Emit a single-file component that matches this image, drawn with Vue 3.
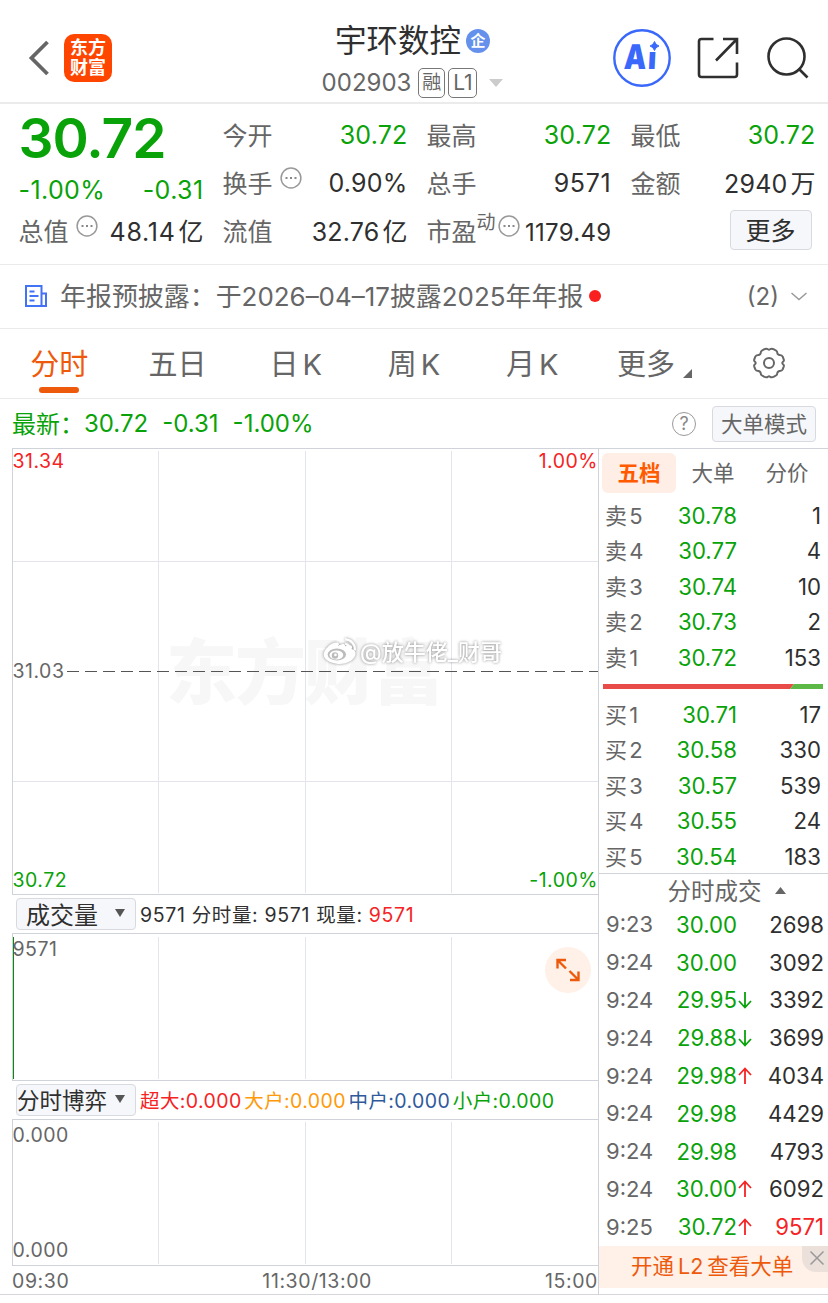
<script setup>
import { ref } from 'vue';

const tabs = ['分时', '五日', '日 K', '周 K', '月 K', '更多'];
const activeTab = ref('分时');

const sideTabs = ['五档', '大单', '分价'];
const activeSide = ref('五档');

const sells = [
  { label: '卖 5', price: '30.78', volume: 1 },
  { label: '卖 4', price: '30.77', volume: 4 },
  { label: '卖 3', price: '30.74', volume: 10 },
  { label: '卖 2', price: '30.73', volume: 2 },
  { label: '卖 1', price: '30.72', volume: 153 },
];

const buys = [
  { label: '买 1', price: '30.71', volume: 17 },
  { label: '买 2', price: '30.58', volume: 330 },
  { label: '买 3', price: '30.57', volume: 539 },
  { label: '买 4', price: '30.55', volume: 24 },
  { label: '买 5', price: '30.54', volume: 183 },
];

const trades = [
  { time: '9:23', price: '30.00', volume: 2698 },
  { time: '9:24', price: '30.00', volume: 3092 },
  { time: '9:24', price: '29.95', dir: 'down', volume: 3392 },
  { time: '9:24', price: '29.88', dir: 'down', volume: 3699 },
  { time: '9:24', price: '29.98', dir: 'up', volume: 4034 },
  { time: '9:24', price: '29.98', volume: 4429 },
  { time: '9:24', price: '29.98', volume: 4793 },
  { time: '9:24', price: '30.00', dir: 'up', volume: 6092 },
  { time: '9:25', price: '30.72', dir: 'up', volume: 9571, hot: true },
];
</script>

<template>
  <div class="page">
    <header class="header">
      <div class="header-left">
        <svg class="back" width="22" height="36" viewBox="0 0 22 36">
          <path d="M19.500 2 3.500 18l16 16" fill="none" stroke="#666" stroke-width="3.800" />
        </svg>
        <div class="logo"><span>东方</span><span>财富</span></div>
      </div>
      <div class="header-title">
        <div class="name">
          <span>宇环数控</span>
          <span class="company">企</span>
        </div>
        <div class="code">
          <span class="code-num">002903</span>
          <span class="tag">融</span>
          <span class="tag tag-l1">L1</span>
          <svg width="14" height="8" viewBox="0 0 14 8"><path d="M0 0h14L7 8z" fill="#ccc" /></svg>
        </div>
      </div>
      <div class="header-right">
        <svg width="58" height="58" viewBox="0 0 58 58">
          <text class="ai-text" transform="translate(10.5 40) skewX(-3) scale(.83 1)">A<tspan dx="2">i</tspan></text>
          <path d="M34.500 10h13v13h-13z" fill="#fff" />
          <path d="M41.500 12.500q1 3.500 4.500 4.500-3.500 1-4.500 4.500-1-3.500-4.500-4.500 3.500-1 4.500-4.500z" fill="#3a68fb" stroke="#3a68fb" />
          <circle cx="29" cy="29" r="27.700" fill="none" stroke="#3a68fb" stroke-width="2.400" />
        </svg>
        <svg class="share" width="42" height="42" viewBox="0 0 42 42">
          <path d="M16.500 2H4.500A2.500 2.500 0 0 0 2 4.500v33A2.500 2.500 0 0 0 4.500 40h33a2.500 2.500 0 0 0 2.500-2.500V25.500M26 2h14v15M39.500 2.500l-20.500 21" fill="none" stroke="#2f2f2f" stroke-width="2.600" />
        </svg>
        <svg width="44" height="44" viewBox="0 0 44 44">
          <circle cx="20.500" cy="20.500" r="18" fill="none" stroke="#2f2f2f" stroke-width="2.600" />
          <path d="M32.500 32.500l9 9" stroke="#2f2f2f" stroke-width="2.600" />
        </svg>
      </div>
    </header>

    <section class="quote">
      <div class="quote-col first">
        <div class="price">30.72</div>
        <div class="cell change"><span>-1.00%</span><span>-0.31</span></div>
        <div class="cell total">
          <label>总值
            <svg class="dots" width="22" height="22" viewBox="0 0 22 22">
              <circle cx="11" cy="11" r="9.900" fill="none" stroke="#999" stroke-width="1.500" />
              <path d="M5.500 11h2M10 11h2M14.500 11h2" stroke="#888" stroke-width="2" />
            </svg>
          </label>
          <b class="wide">48.14<i>亿</i></b>
        </div>
      </div>
      <div class="quote-col">
        <div class="cell"><label>今开</label><b class="green">30.72</b></div>
        <div class="cell">
          <label>换手
            <svg class="dots" width="22" height="22" viewBox="0 0 22 22">
              <circle cx="11" cy="11" r="9.900" fill="none" stroke="#999" stroke-width="1.500" />
              <path d="M5.500 11h2M10 11h2M14.500 11h2" stroke="#888" stroke-width="2" />
            </svg>
          </label>
          <b>0.90%</b>
        </div>
        <div class="cell"><label>流值</label><b>32.76<i>亿</i></b></div>
      </div>
      <div class="quote-col">
        <div class="cell"><label>最高</label><b class="green">30.72</b></div>
        <div class="cell"><label>总手</label><b class="wide">9571</b></div>
        <div class="cell pe">
          <label>市盈<sup>动</sup>
            <svg class="dots" width="22" height="22" viewBox="0 0 22 22">
              <circle cx="11" cy="11" r="9.900" fill="none" stroke="#999" stroke-width="1.500" />
              <path d="M5.500 11h2M10 11h2M14.500 11h2" stroke="#888" stroke-width="2" />
            </svg>
          </label>
          <b>1179.49</b>
        </div>
      </div>
      <div class="quote-col">
        <div class="cell"><label>最低</label><b class="green">30.72</b></div>
        <div class="cell"><label>金额</label><b>2940<i>万</i></b></div>
        <div class="cell more-cell"><button class="more">更多</button></div>
      </div>
    </section>

    <section class="notice">
      <svg width="22" height="22" viewBox="0 0 22 22">
        <path d="M1 1h15.500v20H1zM16.500 8.500H21V21h-4.500M4.500 6.500h5M4.500 11h9M4.500 15.500h5" fill="none" stroke="#4272f5" stroke-width="2" />
      </svg>
      <span class="notice-text">年报预披露：于2026–04–17披露2025年年报</span>
      <span class="dot"></span>
      <span class="count">(2)</span>
      <svg width="16" height="9" viewBox="0 0 16 9"><path d="M.5 1 8 7.500 15.500 1" fill="none" stroke="#999" stroke-width="1.500" /></svg>
    </section>

    <nav class="tabs">
      <div v-for="tab in tabs" :key="tab" class="tab" :class="{ active: tab === activeTab, 'tab-more': tab === '更多' }" @click="activeTab = tab">
        <span>{{ tab }}</span>
        <svg v-if="tab === '更多'" class="corner" width="9" height="9" viewBox="0 0 9 9"><path d="M9 0v9H0z" fill="#666" /></svg>
      </div>
      <div class="tab">
        <svg class="gear" width="34" height="32" viewBox="0 0 34 32">
          <path d="M12 2.300Q14.500 1 16 2.300q1 .8 2 0Q19.500 1 22 2.300l2.300 1.400q.9.700 1 2.100.2 1.900 2.500 2.200 2.200.2 2.900 1.700l1.100 3q.4 1.200-.8 2.100-1.400 1.200 0 2.400 1.200.9.800 2.100l-1.100 3q-.7 1.500-2.900 1.700-2.300.3-2.500 2.200-.1 1.400-1 2.100L22 29.700q-2.500 1.300-4 0-1-.8-2 0-1.500 1.300-4 0l-2.300-1.400q-.9-.7-1-2.100-.2-1.900-2.500-2.200-2.200-.2-2.900-1.700l-1.100-3q-.4-1.200.8-2.100 1.400-1.200 0-2.400-1.200-.9-.8-2.100l1.100-3Q4 8.200 6.200 8q2.300-.3 2.500-2.200.1-1.400 1-2.100z" fill="none" stroke="#666" stroke-width="2" />
          <circle cx="17" cy="16" r="5" fill="none" stroke="#666" stroke-width="2" />
        </svg>
      </div>
    </nav>

    <section class="latest">
      <span class="l-name">最新：</span><span class="l-price">30.72</span><span class="l-diff">-0.31</span><span>-1.00%</span>
      <span class="help">?</span>
      <button class="mode">大单模式</button>
    </section>

    <main class="main">
      <div class="charts">
        <div class="panel price-panel">
          <svg class="grid" width="585" height="445" viewBox="0 0 585 445">
            <text class="wm" x="153" y="249" textLength="278">东方财富</text>
            <path d="M145.500 2v442M292.500 2v442M438.500 2v442M0 112.500h585M0 332.500h585" stroke="#e3e4ec" />
            <path d="M0 222.500h585" stroke="#555" stroke-dasharray="12 6" />
            <g class="weibo" fill="#fff">
              <g transform="translate(23 16) scale(.92)">
                <path d="M328 197c3-2 8-4 8 0 5-2 9-1 7 3 4 1 5 4 4 7-3 7-12 10-20 9-9-1-16-6-14-12 2-5 8-11 13-11 4 0 4 2 2 4z" />
                <ellipse cx="327" cy="206" rx="10" ry="6.500" fill="#bbb" />
                <ellipse cx="326.500" cy="206.500" rx="7.500" ry="5" />
                <circle cx="325" cy="207" r="3.500" fill="#bbb" />
                <circle cx="325.500" cy="206.500" r="1.500" />
                <path d="M336 189.500a10.500 10.500 0 0 1 10.500 12M336 194.500a6 6 0 0 1 5 5" fill="none" stroke="#fff" stroke-width="2.500" />
              </g>
              <text x="347" y="211" textLength="142" lengthAdjust="spacingAndGlyphs">@放牛佬_财哥</text>
            </g>
          </svg>
          <div class="labels"><span class="red">31.34</span><span class="red">1.00%</span></div>
          <div class="labels"><span class="mid">31.03</span></div>
          <div class="labels"><span class="green">30.72</span><span class="green">-1.00%</span></div>
        </div>

        <div class="bar">
          <button class="select">成交量<svg width="10" height="8" viewBox="0 0 10 8"><path d="M0 0h10L5 8z" fill="#555" /></svg></button>
          <span class="vol">9571 分时量: 9571 现量: <em class="red">9571</em></span>
        </div>

        <div class="panel sub-panel vol-panel">
          <svg class="grid" width="585" height="146" viewBox="0 0 585 146">
            <path d="M145.500 3v142M292.500 3v142M438.500 3v142" stroke="#e3e4ec" />
            <path d="M.5 3v142" stroke="#0a8a0a" />
          </svg>
          <div class="labels"><span>9571</span></div>
          <div class="expand">
            <svg width="24" height="24" viewBox="0 0 24 24">
              <path d="M1.500 10.500V2H10M2 2.500l8 8M22.500 13.500v8.500H14M22 21.500l-8.500-8.500" fill="none" stroke="#ee5a0c" stroke-width="2.400" />
            </svg>
          </div>
        </div>

        <div class="bar game">
          <button class="select">分时博弈<svg width="10" height="8" viewBox="0 0 10 8"><path d="M0 0h10L5 8z" fill="#555" /></svg></button>
          <span class="red">超大:0.000</span>
          <span class="orange">大户:0.000</span>
          <span class="blue">中户:0.000</span>
          <span class="green">小户:0.000</span>
        </div>

        <div class="panel sub-panel">
          <svg class="grid" width="585" height="146" viewBox="0 0 585 146">
            <path d="M145.500 2v142M292.500 2v142M438.500 2v142" stroke="#e3e4ec" />
          </svg>
          <div class="labels"><span>0.000</span></div>
          <div class="labels"><span>0.000</span></div>
        </div>

        <div class="axis"><span>09:30</span><span class="noon">11:30/13:00</span><span>15:00</span></div>
      </div>

      <aside class="side">
        <div class="side-tabs">
          <div v-for="tab in sideTabs" :key="tab" class="side-tab" :class="{ active: tab === activeSide }" @click="activeSide = tab">{{ tab }}</div>
        </div>
        <div v-for="row in sells" :key="row.label" class="row">
          <span class="level">{{ row.label }}</span><span class="green">{{ row.price }}</span><span class="num">{{ row.volume }}</span>
        </div>
        <div class="ratio">
          <svg width="220" height="5" viewBox="0 0 220 5">
            <path d="M0 0h191l-4 5H0z" fill="#e94b48" />
            <path d="M191 0h29v5h-33z" fill="#5cb946" />
          </svg>
        </div>
        <div v-for="row in buys" :key="row.label" class="row">
          <span class="level">{{ row.label }}</span><span class="green">{{ row.price }}</span><span class="num">{{ row.volume }}</span>
        </div>
        <div class="trades-title">
          分时成交
          <svg width="11" height="7" viewBox="0 0 11 7"><path d="M5.500 0 11 7H0z" fill="#666" /></svg>
        </div>
        <div v-for="(t, i) in trades" :key="i" class="row trade">
          <span>{{ t.time }}</span>
          <span class="green">{{ t.price }}</span>
          <span class="arrow">
            <svg v-if="t.dir" :class="t.dir" width="14" height="18" viewBox="0 0 14 18">
              <path d="M7 17V2M1 8l6-6.500L13 8" fill="none" stroke="currentColor" stroke-width="1.800" />
            </svg>
          </span>
          <span class="num" :class="{ red: t.hot }">{{ t.volume }}</span>
        </div>
        <div class="promo">
          <span>开通 L2 查看大单</span>
          <div class="close">
            <svg width="16" height="16" viewBox="0 0 16 16"><path d="M1.500 1.500l13 13M14.500 1.500l-13 13" stroke="#999" stroke-width="1.500" /></svg>
          </div>
        </div>
      </aside>
    </main>
  </div>
</template>

<style>
body {
  background: #fff;
}
</style>

<style scoped>
.page {
  width: 828px;
  height: 1303px;
  overflow: hidden;
  box-sizing: border-box;
  font-family: Inter, 'Noto Sans CJK SC', sans-serif;
  font-weight: 400;
  color: #666;
  background: #fff;
}

.page * {
  box-sizing: border-box;
}

svg {
  flex: none;
  display: block;
}

button {
  font-family: inherit;
  padding: 0;
  background: #f6f7fa;
  border: 1px solid #d8dae0;
  border-radius: 4px;
}

em,
i {
  font-style: normal;
}

.green {
  color: #09a209;
}

.red {
  color: #f52323;
}

.orange {
  color: #ff9a0a;
}

.blue {
  color: #30599c;
}

/* header */
.header {
  display: grid;
  grid-template-columns: 1fr auto 1fr;
  height: 104px;
  padding: 0 18px 0 15px;
  border-bottom: 2px solid #ebebeb;
}

.header-left {
  display: flex;
  align-items: center;
  gap: 14px;
  padding: 14px 0 0 13px;
}

.logo {
  display: flex;
  flex-direction: column;
  justify-content: center;
  width: 48px;
  height: 48px;
  border-radius: 10px;
  background: #ff4600;
  color: #fff;
  font-size: 18px;
  font-weight: 700;
  line-height: 20px;
  text-align: center;
}

.header-title {
  display: flex;
  flex-direction: column;
  align-items: center;
  padding-top: 20px;
}

.name {
  display: flex;
  align-items: center;
  gap: 5px;
  height: 42px;
  font-size: 31.500px;
  line-height: 42px;
  color: #2f2f2f;
}

.company {
  width: 24px;
  height: 24px;
  border-radius: 50%;
  background: #6591ec;
  color: #fff;
  font-size: 15px;
  font-weight: 700;
  line-height: 24px;
  text-align: center;
}

.code {
  display: flex;
  align-items: center;
  height: 40px;
  padding-top: 1px;
  font-size: 24px;
}

.code-num {
  margin-right: 7px;
}

.tag {
  width: 27px;
  height: 30px;
  margin-right: 3px;
  border: 1px solid #777;
  border-radius: 5px;
  font-size: 19px;
  line-height: 28px;
  text-align: center;
}

.tag-l1 {
  width: 29px;
  margin-right: 12px;
  font-size: 21px;
}

.header-right {
  display: flex;
  align-items: center;
  justify-content: flex-end;
  padding-top: 14px;
}

.share {
  margin: 0 27px 0 26px;
}

.ai-text {
  font-size: 34px;
  font-weight: 900;
  fill: #3a68fb;
}

/* quote */
.quote {
  display: grid;
  grid-template-columns: repeat(4, 185px);
  gap: 19px;
  height: 161px;
  padding: 7px 0 0 18.500px;
  border-bottom: 1px solid #ebebeb;
}

.cell {
  display: flex;
  align-items: center;
  justify-content: space-between;
  height: 48px;
  font-size: 25px;
  white-space: nowrap;
}

.cell label {
  display: flex;
  align-items: center;
  padding-bottom: 3px;
}

.cell b {
  font-weight: 400;
  letter-spacing: 0.2px;
  color: #2f2f2f;
}

.cell b.wide {
  letter-spacing: 0.7px;
}

.cell b.green {
  color: #09a209;
}

.cell b i {
  margin-left: 3px;
  letter-spacing: 0;
}

.price {
  height: 54px;
  font-size: 55px;
  font-weight: 600;
  letter-spacing: -1px;
  line-height: 54px;
  color: #09a209;
}

.change {
  height: 50px;
  letter-spacing: 0.4px;
  color: #09a209;
}

.total {
  height: 32px;
}

.cell:has(i) {
  padding-bottom: 2px;
}

.cell:has(i) label {
  padding-bottom: 1px;
}

.dots {
  margin: -7px 0 0 7px;
}

.cell sup {
  font-size: 19px;
  line-height: 20px;
  margin-top: -13px;
}

.pe .dots {
  margin-left: 2px;
}

.pe b {
  font-size: 24px;
  letter-spacing: 0.3px;
  padding-top: 3px;
}

.more-cell {
  justify-content: flex-end;
  padding: 0 4px 3px 0;
}

.more {
  width: 82px;
  height: 40px;
  padding-bottom: 3px;
  font-size: 25px;
  color: #2f2f2f;
}

/* notice */
.notice {
  display: flex;
  align-items: center;
  height: 64px;
  padding: 0 21px 1px 25px;
  border-bottom: 1px solid #ebebeb;
  font-size: 25.950px;
  white-space: nowrap;
}

.notice-text {
  width: 523px;
  margin: 0 6px 0 13px;
  padding-bottom: 3px;
}

.dot {
  width: 12px;
  height: 12px;
  border-radius: 50%;
  background: #fb2020;
}

.count {
  margin: 0 12px 0 auto;
  font-size: 24px;
}

/* tabs */
.tabs {
  display: grid;
  grid-template-columns: repeat(7, 1fr);
  height: 70px;
  border-bottom: 1px solid #ebebeb;
  font-size: 29px;
}

.tab {
  position: relative;
  display: flex;
  align-items: center;
  justify-content: center;
  padding-bottom: 3px;
  word-spacing: -4px;
}

.tab-more {
  padding-left: 8px;
}

.tab.active {
  color: #ee5a0c;
}

.tab.active::after {
  content: '';
  position: absolute;
  left: 39px;
  bottom: 5px;
  width: 40px;
  height: 6px;
  border-radius: 3px;
  background: #ee5a0c;
}

.corner {
  margin: 22px 0 0 8px;
}

.gear {
  margin-top: 2px;
}

/* latest */
.latest {
  display: flex;
  align-items: center;
  height: 49px;
  padding: 0 12px;
  font-size: 24px;
  color: #09a209;
}

.l-name {
  padding-bottom: 3px;
}

.l-price {
  margin-right: 14px;
}

.l-diff {
  margin-right: 14px;
}

.help {
  width: 24px;
  height: 24px;
  margin: 0 16px 0 auto;
  border: 1.500px solid #999;
  border-radius: 50%;
  color: #888;
  font-size: 18px;
  line-height: 22px;
  text-align: center;
}

.mode {
  width: 104px;
  height: 36px;
  padding-bottom: 2px;
  font-size: 21.500px;
  color: #666;
}

/* main */
.main {
  display: grid;
  grid-template-columns: 587px 229px;
  height: 847px;
  padding-left: 12px;
  border-bottom: 1px solid #d5d7dc;
}

.charts {
  border-right: 1px solid #d0d3da;
  font-size: 19.500px;
}

.panel {
  position: relative;
  display: flex;
  flex-direction: column;
  justify-content: space-between;
  border-top: 1px solid #d0d3da;
  border-left: 1px solid #d0d3da;
}

.grid {
  position: absolute;
  left: 0;
  top: 0;
}

.price-panel {
  height: 446px;
  padding: 2px 0 3px;
}

.sub-panel {
  height: 146px;
  padding: 5px 0 4px;
}

.vol-panel {
  height: 147px;
}

.labels {
  position: relative;
  display: flex;
  justify-content: space-between;
  height: 21px;
  margin-left: -0.500px;
  letter-spacing: 0.5px;
  line-height: 21px;
}

.mid {
  padding-right: 1px;
  background: #fff;
}

.wm {
  font-size: 71px;
  font-weight: 900;
  fill: #f7f7f7;
}

.weibo {
  font-size: 22px;
  font-weight: 500;
  filter: drop-shadow(0 0 1.500px #888);
}

.bar {
  display: flex;
  align-items: center;
  height: 39px;
  padding-left: 4px;
  border-top: 1px solid #d0d3da;
  white-space: nowrap;
}

.select {
  display: flex;
  align-items: center;
  justify-content: space-between;
  width: 120px;
  height: 32px;
  margin-right: 4px;
  padding: 0 10px 2px 9px;
  font-size: 24px;
  color: #2f2f2f;
}

.vol {
  padding-bottom: 2px;
  letter-spacing: 0.650px;
  color: #2f2f2f;
}

.vol .red {
  color: #f52323;
}

.game .select {
  padding-left: 0;
  padding-bottom: 3px;
  font-size: 22.500px;
}

.game span {
  margin-right: 2.600px;
  padding-bottom: 2px;
  letter-spacing: 0.400px;
}

.expand {
  position: absolute;
  right: 7px;
  top: 13px;
  display: flex;
  align-items: center;
  justify-content: center;
  width: 46px;
  height: 46px;
  border-radius: 50%;
  background: #fff0e8;
}

.axis {
  display: flex;
  align-items: center;
  justify-content: space-between;
  height: 30px;
  padding-top: 1px;
  border-top: 1px solid #d0d3da;
  letter-spacing: 0.600px;
}

.noon {
  margin-left: 20px;
}

/* side */
.side-tabs {
  display: grid;
  grid-template-columns: repeat(3, 74px);
  height: 49.500px;
  padding: 4px 0 5.500px 3px;
  border-top: 1px solid #d0d3da;
  font-size: 21.500px;
  line-height: 40px;
  text-align: center;
}

.side-tab.active {
  border-radius: 6px;
  background: #ffeee5;
  color: #ff5a00;
  font-weight: 700;
}

.row {
  display: grid;
  grid-template-columns: 60px 72px 1fr;
  align-items: center;
  height: 35.500px;
  padding: 0 7px 1px 6px;
  font-size: 22.200px;
  text-align: right;
  white-space: nowrap;
}

.row > span:first-child {
  font-size: 22px;
  text-align: left;
}

.row .level {
  padding-bottom: 3px;
  word-spacing: -4px;
}

.num {
  color: #2f2f2f;
}

.num.red {
  color: #f52323;
}

.ratio {
  height: 21.500px;
  padding: 9px 0 0 4px;
}

.trades-title {
  display: flex;
  align-items: center;
  justify-content: center;
  gap: 13px;
  height: 33px;
  margin-top: -1px;
  padding-left: 26px;
  border-top: 1px solid #d0d3da;
  font-size: 23.500px;
}

.trade {
  grid-template-columns: 50px 81px 15px 1fr;
  height: 37.800px;
  padding: 0 4px 1px 7px;
}

.arrow {
  display: flex;
  justify-content: flex-end;
}

.up {
  color: #f52323;
}

.down {
  color: #09a209;
  transform: rotate(180deg);
}

.promo {
  position: relative;
  height: 42px;
  padding-left: 32px;
  background: #fff0e8;
  color: #ee5a0c;
  font-size: 21.500px;
  line-height: 40px;
  word-spacing: -2px;
}

.close {
  position: absolute;
  right: 0;
  top: 0;
  display: flex;
  align-items: center;
  justify-content: flex-end;
  width: 26px;
  height: 26px;
  padding: 0 3px 3px 0;
  border-bottom-left-radius: 14px;
  background: #ece0da;
}
</style>
